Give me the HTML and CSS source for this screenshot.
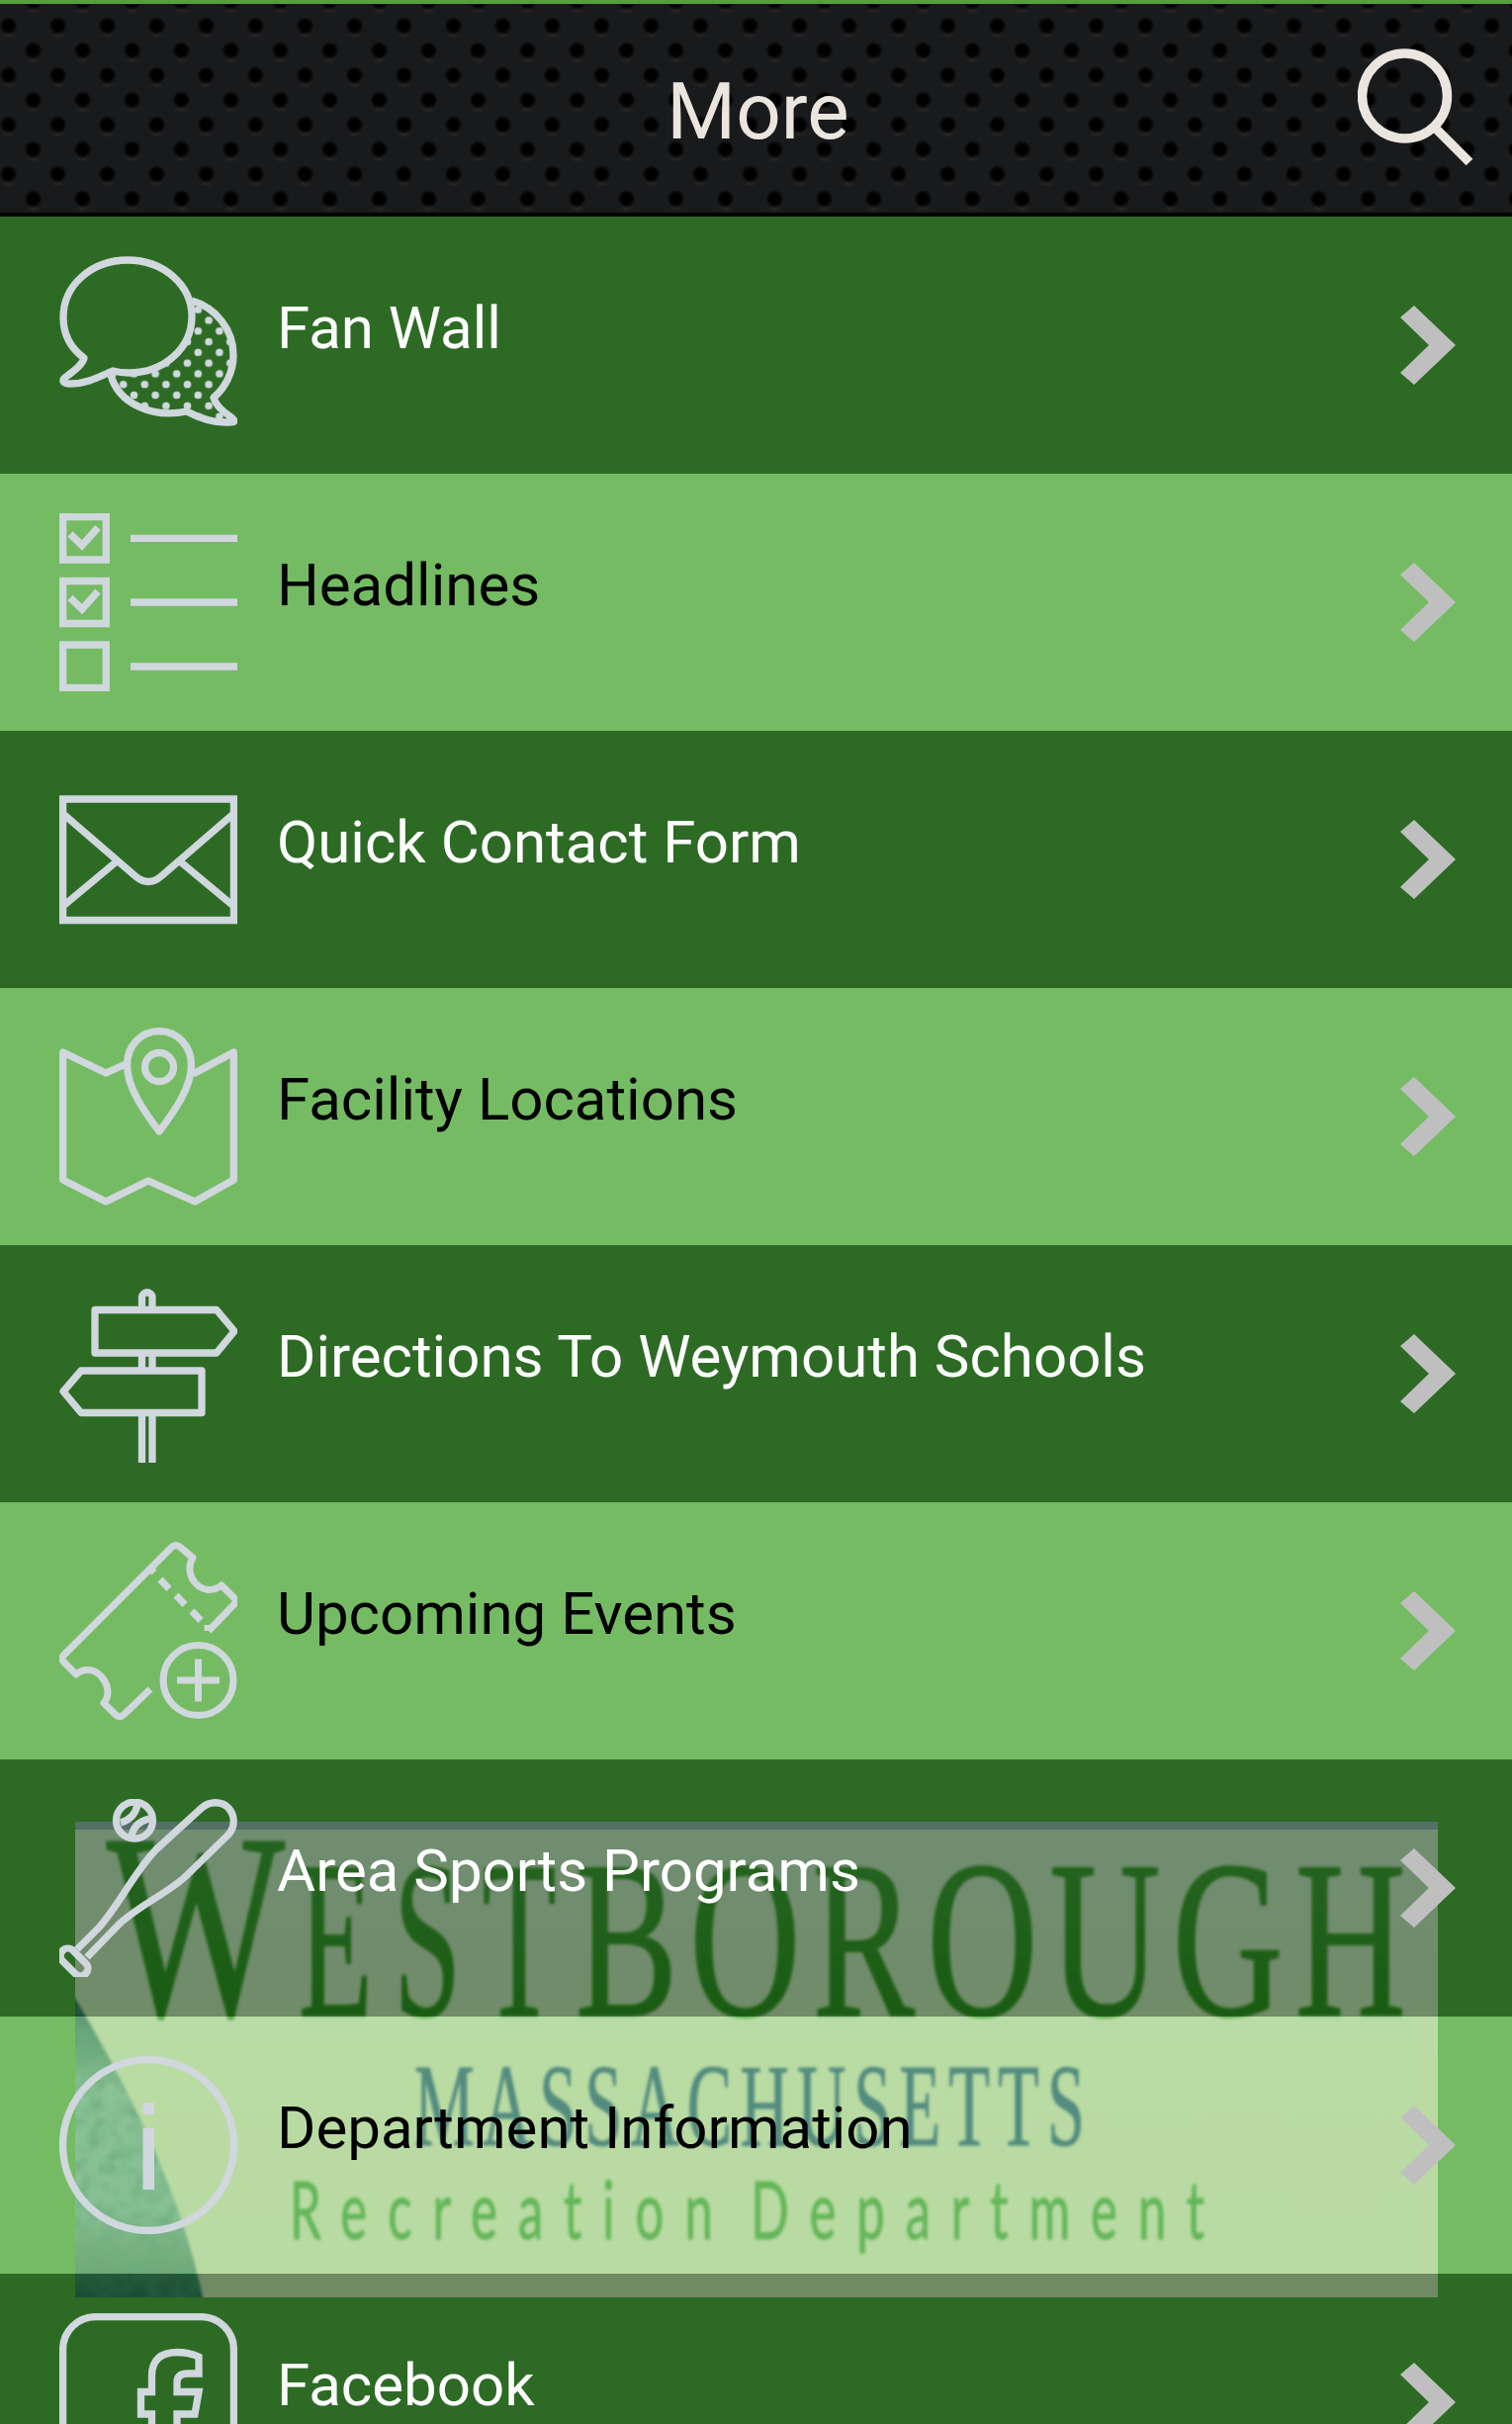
FILE: index.html
```html
<!DOCTYPE html>
<html lang="en">
<head>
  <meta charset="UTF-8">
  <meta name="viewport" content="width=device-width, initial-scale=1.0">
  <title>More</title>
  <link rel="stylesheet" href="styles.css">
</head>
<body>
  <header>
    <h1>More</h1>
    <svg class="search" viewBox="0 0 120 120">
      <circle cx="47.5" cy="48" r="43"/>
      <path d="M77 79L113 115"/>
    </svg>
  </header>

  <!-- Background logo, shows through the rows -->
  <svg class="banner" viewBox="0 0 1378 481">
    <defs>
      <linearGradient id="paper" x1="0" y1="0" x2="0" y2="1">
        <stop offset="0" stop-color="#fff4fa"/>
        <stop offset=".35" stop-color="#fff0e8"/>
        <stop offset=".5" stop-color="#ffefd8"/>
        <stop offset="1" stop-color="#fdecd8"/>
      </linearGradient>
      <linearGradient id="field" x1="0" y1="0" x2="0" y2="1">
        <stop offset="0" stop-color="#1c4a68"/>
        <stop offset=".1" stop-color="#2a5068"/>
        <stop offset=".2" stop-color="#4a7878"/>
        <stop offset=".3" stop-color="#88aeb4"/>
        <stop offset=".7" stop-color="#80aab0"/>
        <stop offset=".86" stop-color="#587c78"/>
        <stop offset="1" stop-color="#205058"/>
      </linearGradient>
      <linearGradient id="green" x1="0" y1="0" x2="0" y2="1">
        <stop offset="0" stop-color="#489038"/>
        <stop offset="1" stop-color="#1c7000"/>
      </linearGradient>
      <filter id="soft"><feGaussianBlur stdDeviation="1.8"/></filter>
      <filter id="grass" x="0" y="0" width="1" height="1">
        <feTurbulence type="fractalNoise" baseFrequency=".07" numOctaves="2" result="n"/>
        <feColorMatrix in="n" type="matrix" values="0 0 0 0 .05  0 0 0 0 .2  0 0 0 0 .2  2 0 0 0 -.75" result="d"/>
        <feComposite in="d" in2="SourceGraphic" operator="in" result="t"/>
        <feMerge><feMergeNode in="SourceGraphic"/><feMergeNode in="t"/></feMerge>
      </filter>
    </defs>
    <rect width="1378" height="481" fill="url(#paper)"/>
    <rect width="1378" height="8" fill="#b4aadc"/>
    <g filter="url(#soft)">
      <path d="M-4 172C50 262 106 370 130 485H-4Z" fill="url(#field)" filter="url(#grass)"/>
      <g class="town">
        <text x="32" y="196" font-size="268" textLength="180" lengthAdjust="spacingAndGlyphs">W</text>
        <text class="wide" x="226" y="196" font-size="226" textLength="282" lengthAdjust="spacingAndGlyphs">EST</text>
        <text x="506" y="196" font-size="226" letter-spacing="18" textLength="852" lengthAdjust="spacingAndGlyphs">BOROUGH</text>
      </g>
      <text class="state" x="343" y="327" textLength="686" lengthAdjust="spacingAndGlyphs">MASSACHUSETTS</text>
      <g class="dept" transform="scale(.62 1)">
        <text x="350" y="422" textLength="690">Recreation</text>
        <text x="1102" y="422" textLength="740">Department</text>
      </g>
    </g>
  </svg>

  <ul class="menu">
    <li>
      <svg class="icon" viewBox="0 0 180 180">
        <defs>
          <pattern id="dots" x="140.3" y="75.7" width="21.6" height="21.6" patternUnits="userSpaceOnUse" patternTransform="translate(-5.4 -5.4)">
            <circle class="solid" cx="5.4" cy="5.4" r="3.8"/>
            <circle class="solid" cx="16.2" cy="16.2" r="3.8"/>
          </pattern>
        </defs>
        <path fill="url(#dots)" stroke="none" d="M134 45C158 52 176 74 176 100C176 117 168 133 156 143C158 152 168 159 174 163C180 168 176 168 168 168C154 168 140 163 129 157C95 164 60 150 52 120Q62 118 70 118C106 118 134 93 134 61Z"/>
        <path d="M134 45C158 52 176 74 176 100C176 117 168 133 156 143C158 152 168 159 174 163C180 168 176 168 168 168C154 168 140 163 129 157C95 164 60 150 52 120"/>
        <path d="M25 103C10 92 4 77 4 62C4 29 33 4 69 4S134 29 134 61S106 118 70 118Q62 118 54 116C40 122 28 129 12 129C2 129 2 125 8 121C18 114 24 108 25 103Z"/>
      </svg>
      <span>Fan Wall</span>
      <svg class="arrow" viewBox="0 0 56 80"><path d="M14 0L56 40L14 80L0 68L29 40L0 12Z"/></svg>
    </li>
    <li>
      <svg class="icon square" viewBox="0 0 180 180">
        <path d="M3.7 3.7H47.3V47H3.7ZM3.7 68.5H47.3V111.5H3.7ZM3.7 133H47.3V176.3H3.7ZM72 25.3H180M72 90H180M72 155H180M11 21L23 32.500L39 14.500M11 85.500L23 97L39 79"/>
      </svg>
      <span>Headlines</span>
      <svg class="arrow" viewBox="0 0 56 80"><path d="M14 0L56 40L14 80L0 68L29 40L0 12Z"/></svg>
    </li>
    <li>
      <svg class="icon square" viewBox="0 0 180 180">
        <path d="M3.6 29H176.4V151.500H3.6ZM4 44L77 107Q90 118 103 107L176 44M4 137L58 92M176 137L122 92"/>
      </svg>
      <span>Quick Contact Form</span>
      <svg class="arrow" viewBox="0 0 56 80"><path d="M14 0L56 40L14 80L0 68L29 40L0 12Z"/></svg>
    </li>
    <li>
      <svg class="icon" viewBox="0 0 180 180">
        <path d="M67 37L47 46L3.7 25V154L47 176L90 155L137 176L176.3 154V25L137 46L134 44"/>
        <path d="M101 105C85 84 68.500 60 68.500 38C68.500 18 83 3.7 101 3.7S133.500 18 133.500 38C133.500 60 117 84 101 105Z"/>
        <circle cx="101" cy="40" r="14.500"/>
      </svg>
      <span>Facility Locations</span>
      <svg class="arrow" viewBox="0 0 56 80"><path d="M14 0L56 40L14 80L0 68L29 40L0 12Z"/></svg>
    </li>
    <li>
      <svg class="icon" viewBox="0 0 180 180">
        <path d="M36 25.500H159L177 47L159 69H36ZM144 87H22L4 108L22 129.500H144Z"/>
        <path d="M83.500 25V13A5.200 5.200 0 0 1 94 13V25M83.500 69V87M94 69V87M83.500 130V184M94 130V184"/>
      </svg>
      <span>Directions To Weymouth Schools</span>
      <svg class="arrow" viewBox="0 0 56 80"><path d="M14 0L56 40L14 80L0 68L29 40L0 12Z"/></svg>
    </li>
    <li>
      <svg class="icon thin" viewBox="0 0 180 180">
        <path d="M92 149L66 174Q61 179 56 174L45 163C58 148 36 118 17 134L5 122Q1 118 5 114L113 6Q118 1 123 6L135 16C124 33 144 59 164 44L176 56Q180 60 176 64L151 90"/>
        <path d="M91 26L96 31M102 38L111 47.500M118 54L127 63.500M134 70L143 79.500M150 84V90"/>
        <circle cx="140.500" cy="140" r="35.500"/>
        <path d="M119 140H162M140.500 118.500V161.500"/>
      </svg>
      <span>Upcoming Events</span>
      <svg class="arrow" viewBox="0 0 56 80"><path d="M14 0L56 40L14 80L0 68L29 40L0 12Z"/></svg>
    </li>
    <li>
      <svg class="icon" viewBox="0 0 180 180">
        <circle cx="76" cy="21.700" r="18.500"/>
        <path d="M62 24Q76 20 79 6M73 38Q75 24 91 20"/>
        <path d="M18 152L40 130C60 108 75 75 98 51L144 9C152 2 164 2 171 9C178 17 178 28 171 36L128 78C110 95 80 108 60 127L28 160"/>
        <rect x="-1.500" y="157.500" width="33" height="15" rx="7.500" transform="rotate(45 15 165)"/>
      </svg>
      <span>Area Sports Programs</span>
      <svg class="arrow" viewBox="0 0 56 80"><path d="M14 0L56 40L14 80L0 68L29 40L0 12Z"/></svg>
    </li>
    <li>
      <svg class="icon" viewBox="0 0 180 180">
        <circle cx="90" cy="90" r="86.500"/>
        <path class="solid" d="M84.500 47H96V59H84.500ZM84.500 73H96V135H84.500Z"/>
      </svg>
      <span>Department Information</span>
      <svg class="arrow" viewBox="0 0 56 80"><path d="M14 0L56 40L14 80L0 68L29 40L0 12Z"/></svg>
    </li>
    <li>
      <svg class="icon square" viewBox="0 0 180 180">
        <rect x="3.600" y="3.600" width="172.800" height="172.800" rx="33"/>
        <path d="M93.500 176V102H82.500V79.500H93.500V63C93.500 47 103 39.500 119 39.500Q131 39.500 141 44V61H130Q119 61 119 70V79.500H141L137 102H119V176"/>
      </svg>
      <span>Facebook</span>
      <svg class="arrow" viewBox="0 0 56 80"><path d="M14 0L56 40L14 80L0 68L29 40L0 12Z"/></svg>
    </li>
  </ul>
</body>
</html>
```

FILE: styles.css
```css
* { box-sizing: border-box; }
body { position: relative; height: 2451px; margin: 0; padding-top: 4px; overflow: hidden; background: #569f3b; font-family: Roboto, sans-serif; }

header {
  display: flex;
  align-items: center;
  height: 215px;
  padding: 0 36px 0 160px;
  border-bottom: 4px solid #020302;
  background-color: #191a1c;
  background-image:
    radial-gradient(circle, #000 5px, rgba(0,0,0,.6) 7px, transparent 9px),
    radial-gradient(circle, #000 5px, rgba(0,0,0,.6) 7px, transparent 9px),
    radial-gradient(ellipse 8px 3px, rgba(60,52,46,.45), transparent),
    radial-gradient(ellipse 8px 3px, rgba(60,52,46,.45), transparent);
  background-size: 50px 50px;
  background-position: -16.5px -3px, 8.5px 22px, -16.5px 7px, 8.5px 32px;
}
h1 { flex: 1; margin: 6px 0 0; color: #ebe5df; font-size: 80px; font-weight: 400; line-height: 94px; text-align: center; }
.search { width: 120px; height: 120px; margin-top: -2px; fill: none; stroke: #ebe5df; stroke-width: 9.5; }

.banner { position: absolute; left: 76px; top: 1842px; width: 1378px; height: 481px; overflow: hidden; }
.town { font-family: "Liberation Serif", serif; fill: url(#green); stroke: #348414; stroke-width: 2; }
.wide { letter-spacing: 40px; }
.state { font-family: "Liberation Serif", serif; font-size: 118px; letter-spacing: 14px; fill: #00287c; stroke: #00287c; }
.dept { font-family: Lato, sans-serif; font-size: 82px; font-variant-ligatures: none; fill: #2c901c; stroke: #2c901c; }

.menu { position: relative; margin: 0; padding: 0; list-style: none; }
.menu li { display: flex; align-items: center; height: 260px; padding: 0 57px 0 60px; background: rgba(18,73,24,.6); color: #fff; }
.menu li:nth-child(even) { background: rgba(138,206,129,.6); color: #000; }
.menu span { flex: 1; align-self: flex-start; margin: 78px 0 0 40px; font-size: 60px; line-height: 70px; white-space: nowrap; }

.icon { width: 180px; height: 180px; fill: none; stroke: #d0d7dd; stroke-width: 7.3; stroke-linejoin: round; }
.icon.square { stroke-linejoin: miter; }
.icon.thin { stroke-width: 7; }
.solid { fill: #d0d7dd; stroke: none; }
.arrow { width: 56px; height: 80px; fill: #c0bfc0; }
```
